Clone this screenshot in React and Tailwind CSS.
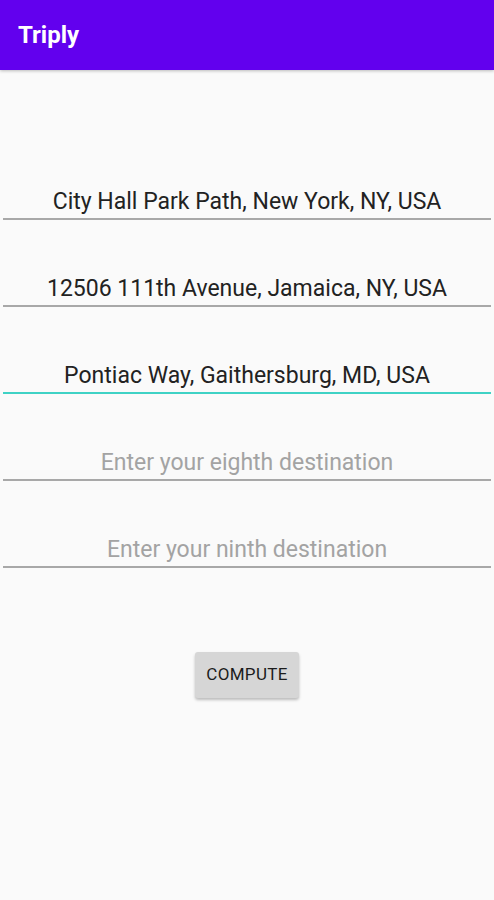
import React from 'react';

const fields = [
  { value: 'City Hall Park Path, New York, NY, USA' },
  { value: '12506 111th Avenue, Jamaica, NY, USA' },
  { value: 'Pontiac Way, Gaithersburg, MD, USA', focused: true },
  { placeholder: 'Enter your eighth destination' },
  { placeholder: 'Enter your ninth destination' },
];

const App = () => {
  return (
    <div className="min-h-[900px] w-full bg-[#fafafa] font-['Roboto',sans-serif]">
      <header className="h-[70px] bg-[#6200ee] flex items-center px-[18px] shadow-[0_1px_3px_rgba(0,0,0,0.25)]">
        <h1 className="text-white text-[24px] font-bold">Triply</h1>
      </header>

      <main className="pt-[63px] px-[3px]">
        {fields.map((f, i) => (
          <div key={i} className="h-[87px] flex flex-col justify-end">
            <div
              className={`pb-[1px] text-center text-[23px] leading-[30px] border-b-2 ${
                f.focused ? 'border-[#3fd2c5]' : 'border-[#a8a8a8]'
              } ${f.value ? 'text-[#222]' : 'text-[#a3a3a3]'}`}
            >
              {f.value || f.placeholder}
            </div>
          </div>
        ))}

        <div className="flex justify-center pt-[84px]">
          <button className="w-[104px] h-[46px] bg-[#d6d6d6] rounded-[3px] text-[17px] text-[#1c1c1c] tracking-[0.3px] shadow-[0_2px_3px_rgba(0,0,0,0.25)]">
            COMPUTE
          </button>
        </div>
      </main>
    </div>
  );
};

export default App;
